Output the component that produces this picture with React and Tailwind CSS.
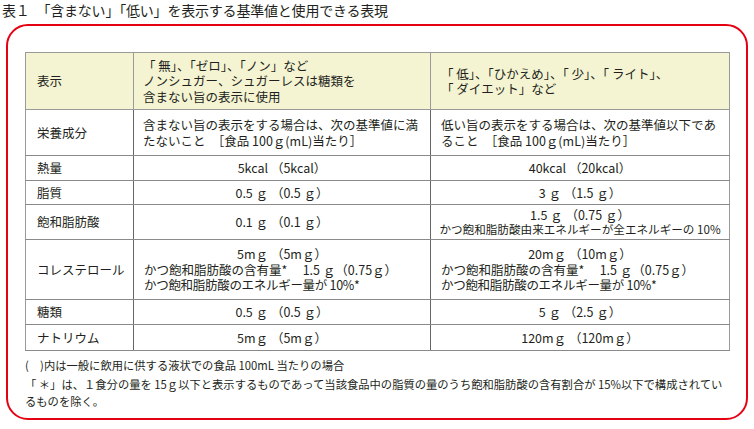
const font = { fontFamily: '"Noto Sans CJK JP", "Noto Sans", sans-serif' }

// a: middle column, b: right column. each line: [text, kind]
// kind: c = centred, l = left aligned, n = left + tighter, s = centred and smaller
const rows = [
  { label: '熱量', h: 'h-[25px]', a: [['5kcal （5kcal）', 'c']], b: [['40kcal （20kcal）', 'c']] },
  { label: '脂質', h: 'h-[24px]', a: [['0.5 ｇ （0.5 ｇ）', 'c']], b: [['3 ｇ （1.5 ｇ）', 'c']] },
  {
    label: '飽和脂肪酸',
    h: 'h-[35px]',
    a: [['0.1 ｇ （0.1 ｇ）', 'c']],
    b: [
      ['1.5 ｇ （0.75 ｇ）', 'c'],
      ['かつ飽和脂肪酸由来エネルギーが全エネルギーの 10%', 's'],
    ],
  },
  {
    label: 'コレステロール',
    h: 'h-[60px]',
    a: [
      ['5mｇ （5mｇ）', 'c'],
      ['かつ飽和脂肪酸の含有量*　 1.5 ｇ（0.75ｇ）', 'l'],
      ['かつ飽和脂肪酸のエネルギー量が 10%*', 'n'],
    ],
    b: [
      ['20mｇ （10mｇ）', 'c'],
      ['かつ飽和脂肪酸の含有量*　 1.5 ｇ（0.75ｇ）', 'l'],
      ['かつ飽和脂肪酸のエネルギー量が 10%*', 'n'],
    ],
  },
  { label: '糖類', h: 'h-[25px]', a: [['0.5 ｇ （0.5 ｇ）', 'c']], b: [['5 ｇ （2.5 ｇ）', 'c']] },
  { label: 'ナトリウム', h: 'h-[26px]', a: [['5mｇ （5mｇ）', 'c']], b: [['120mｇ （120mｇ）', 'c']] },
]

const lineClass = {
  c: 'text-center',
  l: 'text-left pl-[10px]',
  n: 'text-left pl-[10px] tracking-[-0.3px]',
  s: 'text-center text-[11.6px]',
}

const Lines = ({ lines }) => (
  <div className="flex flex-col">
    {lines.map(([t, k], i) => (
      <span key={i} className={`whitespace-pre ${lineClass[k]}`}>
        {t}
      </span>
    ))}
  </div>
)

const cellLeft = 'border-y border-[#8a8a8a] border-r border-r-[#666] align-middle'

export default function App() {
  return (
    <div className="w-[754px] h-[429px] bg-white text-[#231f20] overflow-hidden" style={font}>
      <h1 className="pl-[2px] pt-[1px] text-[14px] leading-[18px] font-normal tracking-[-0.2px]">
        表１　「含まない」「低い」を表示する基準値と使用できる表現
      </h1>

      <div className="mx-[6px] mt-[5px] h-[396px] rounded-[22px] border-2 border-[#e50012] pt-[26px] pl-[17px] pr-[17px]">
        <table className="w-[704px] border-collapse border border-[#9a9a9a] text-[12.5px] leading-[15.5px] table-fixed">
          <colgroup>
            <col className="w-[108px]" />
            <col className="w-[297px]" />
            <col className="w-[299px]" />
          </colgroup>
          <tbody>
            <tr className="h-[57px] bg-[#f4f4d2]">
              <td className="border border-[#9a9a9a] pl-[11px] align-middle">表示</td>
              <td className="border border-[#9a9a9a] pl-[9px] align-middle">
                「 無」、「ゼロ」、「ノン」など
                <br />
                ノンシュガー、シュガーレスは糖類を
                <br />
                含まない旨の表示に使用
              </td>
              <td className="border border-[#9a9a9a] pl-[10px] align-middle">
                「 低」、「ひかえめ」、「 少」、「 ライト」、
                <br />
                「 ダイエット」など
              </td>
            </tr>
            <tr className="h-[46px]">
              <td className={`${cellLeft} pl-[11px]`}>栄養成分</td>
              <td className={`${cellLeft} pl-[9px]`}>
                含まない旨の表示をする場合は、次の基準値に満
                <br />
                たないこと　［食品 100ｇ(mL)当たり］
              </td>
              <td className="border-y border-[#8a8a8a] pl-[10px] align-middle">
                低い旨の表示をする場合は、次の基準値以下であ
                <br />
                ること　［食品 100ｇ(mL)当たり］
              </td>
            </tr>
            {rows.map((r) => (
              <tr key={r.label} className={r.h}>
                <td className={`${cellLeft} pl-[11px]`}>{r.label}</td>
                <td className={cellLeft}>
                  <Lines lines={r.a} />
                </td>
                <td className="border-y border-[#8a8a8a] align-middle">
                  <Lines lines={r.b} />
                </td>
              </tr>
            ))}
          </tbody>
        </table>

        <div className="mt-[5px] text-[11.3px] leading-[19px] whitespace-nowrap">
          <p>(　)内は一般に飲用に供する液状での食品 100mL 当たりの場合</p>
          <p className="mt-[1px] leading-[17px]">
            「 ＊」は、１食分の量を 15ｇ以下と表示するものであって当該食品中の脂質の量のうち飽和脂肪酸の含有割合が 15%以下で構成されてい
            <br />
            るものを除く。
          </p>
        </div>
      </div>
    </div>
  )
}
